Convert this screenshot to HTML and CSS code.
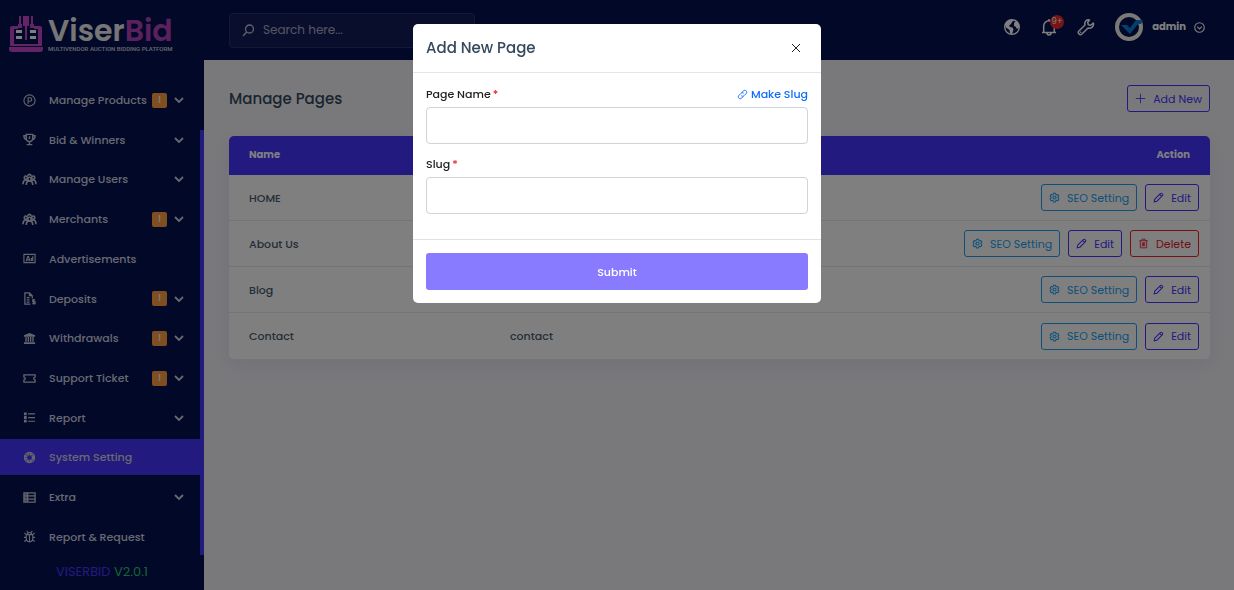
FILE: index.html
```html
<!DOCTYPE html>
<html lang="en">
<head>
    <meta charset="UTF-8">
    <meta name="viewport" content="width=device-width, initial-scale=1.0">
    <title>ViserBid - Manage Pages</title>
    <link rel="stylesheet" href="styles.css">
</head>
<body>

    <!-- Shared icons -->
    <svg class="sprite" aria-hidden="true">
        <symbol id="chevron" viewBox="0 0 10 10"><path d="M1 3l4 4 4-4" fill="none" stroke="currentColor" stroke-width="1.8"/></symbol>
        <symbol id="users" viewBox="0 0 16 14">
            <g fill="none" stroke="currentColor" stroke-width="1.7">
                <circle cx="4" cy="5" r="1.700"/><circle cx="12" cy="5" r="1.700"/><circle cx="8" cy="6.500" r="1.900"/>
                <path d="M1 12c0-5 5-6 5-2M15 12c0-5-5-6-5-2M4.500 13c0-6 7-6 7 0M6 3c1-2 3-2 4 0"/>
            </g>
        </symbol>
        <symbol id="gear" viewBox="0 0 14 14">
            <g fill="none" stroke="currentColor" stroke-width="1.3" stroke-linejoin="round">
                <path d="M5.700 1.500h2.600l.4 1.600 1 .6 1.600-.5 1.300 2.200-1.200 1.200v1l1.200 1.200-1.300 2.200-1.600-.5-1 .6-.4 1.600H5.700l-.4-1.600-1-.6-1.600.5-1.300-2.200 1.200-1.200v-1L1.400 5.400l1.300-2.200 1.600.5 1-.6z"/>
                <circle cx="7" cy="7" r="2"/>
            </g>
        </symbol>
        <symbol id="pen" viewBox="0 0 14 14"><path d="M1.500 12.500l.8-3.500 7-7c1.500-1.500 4.200 1.200 2.700 2.700l-7 7zM8.300 3l2.700 2.700" fill="none" stroke="currentColor" stroke-width="1.300"/></symbol>
        <symbol id="trash" viewBox="0 0 14 14"><path d="M1.500 3.500h11M5 3.500v-2h4v2M3 3.500v9h8v-9M5.500 5.500v5M7 5.500v5M8.500 5.500v5" fill="none" stroke="currentColor" stroke-width="1.100"/></symbol>
    </svg>

    <div class="page-wrapper">
        <!-- Sidebar -->
        <aside class="sidebar">
            <a class="logo" href="#">
                <svg width="36" height="38" viewBox="0 0 36 38" aria-hidden="true">
                    <g fill="#c548c9">
                        <path d="M4 11h6v3H6v15h24V14h-4v-3h6a2 2 0 0 1 2 2v18H2V13a2 2 0 0 1 2-2z"/>
                        <path d="M1 32h34v2a3 3 0 0 1-3 3H4a3 3 0 0 1-3-3z"/>
                        <path d="M11 1h2v8h-2zM23 1h2v8h-2zM15 1h6v10h-6zM10 9h4v4h-4zM22 9h4v4h-4zM17 10h2v15h-2z"/>
                    </g>
                    <path d="M8 15h6v3H8zM8 21h6v3H8zM22 15h6v3h-6zM22 21h6v3h-6z" fill="#fff"/>
                </svg>
                <span class="logo-text">
                    <span class="logo-name">Viser<b>Bid</b></span>
                    <span class="logo-tag">MULTIVENDOR AUCTION BIDDING PLATFORM</span>
                </span>
            </a>

            <nav class="menu">
                <a class="menu-item" href="#">
                    <svg class="menu-icon" viewBox="0 0 14 14"><g fill="none" stroke="currentColor" stroke-width="1.200"><circle cx="7" cy="7" r="6"/><path d="M5.500 10.500v-6.500h2a1.800 1.800 0 0 1 0 3.800h-2"/></g></svg>
                    <span>Manage Products</span><i class="alert">!</i><svg class="chevron"><use href="#chevron"/></svg>
                </a>
                <a class="menu-item" href="#">
                    <svg class="menu-icon" viewBox="0 0 14 14"><path d="M3.500 1.500h7v4c0 5-7 5-7 0zM3.500 3h-2.500c0 3 1 4 3 4M10.500 3h2.500c0 3-1 4-3 4M7 3.500v3M7 9v3M4 12.500h6" fill="none" stroke="currentColor" stroke-width="1.500"/></svg>
                    <span>Bid &amp; Winners</span><svg class="chevron"><use href="#chevron"/></svg>
                </a>
                <a class="menu-item" href="#">
                    <svg class="menu-icon"><use href="#users"/></svg>
                    <span>Manage Users</span><svg class="chevron"><use href="#chevron"/></svg>
                </a>
                <a class="menu-item" href="#">
                    <svg class="menu-icon"><use href="#users"/></svg>
                    <span>Merchants</span><i class="alert">!</i><svg class="chevron"><use href="#chevron"/></svg>
                </a>
                <a class="menu-item" href="#">
                    <svg class="menu-icon" viewBox="0 0 14 14"><path d="M1 2.500h12v9H1zM3.500 10l1.500-5h1l1.500 5M4 8.500h3M10.500 4.500V9H9V7h1.500" fill="none" stroke="currentColor" stroke-width="1.200"/></svg>
                    <span>Advertisements</span>
                </a>
                <a class="menu-item" href="#">
                    <svg class="menu-icon" viewBox="0 0 14 14"><path d="M8 13H2V1h5l3 3v3M7 1v3h3M4 6h3M4 8.500h3M4 11h3M13 8.500h-2.500v2H13v2h-3M11.500 7.500v6" fill="none" stroke="currentColor" stroke-width="1.300"/></svg>
                    <span>Deposits</span><i class="alert">!</i><svg class="chevron"><use href="#chevron"/></svg>
                </a>
                <a class="menu-item" href="#">
                    <svg class="menu-icon" viewBox="0 0 14 14"><path d="M7 1l6 2.500V5H1V3.500zM2.500 5.500H4v5H2.500zM5 5.500h1.500v5H5zM7.500 5.500H9v5H7.500zM10 5.500h1.500v5H10zM1 11h12v2H1z" fill="currentColor"/></svg>
                    <span>Withdrawals</span><i class="alert">!</i><svg class="chevron"><use href="#chevron"/></svg>
                </a>
                <a class="menu-item" href="#">
                    <svg class="menu-icon" viewBox="0 0 14 14"><path d="M1 3h12v2.500c-2 .5-2 2.500 0 3V11H1V8.500c2-.5 2-2.500 0-3z" fill="none" stroke="currentColor" stroke-width="1.400"/></svg>
                    <span>Support Ticket</span><i class="alert">!</i><svg class="chevron"><use href="#chevron"/></svg>
                </a>
                <a class="menu-item" href="#">
                    <svg class="menu-icon" viewBox="0 0 14 14"><path d="M1 1.500h3v3H1zM1 5.500h3v3H1zM1 9.500h3v3H1zM5.500 2.500H13v1.200H5.500zM5.500 6.500H13v1.200H5.500zM5.500 10.500H13v1.200H5.500z" fill="currentColor"/></svg>
                    <span>Report</span><svg class="chevron"><use href="#chevron"/></svg>
                </a>
                <a class="menu-item active" href="#">
                    <svg class="menu-icon" viewBox="0 0 14 14"><g fill="none" stroke="currentColor"><circle cx="7" cy="7" r="5.500" stroke-width="1.200"/><circle cx="7" cy="7" r="3.800" stroke-width="2.500" stroke-dasharray="2.400 .58"/></g></svg>
                    <span>System Setting</span>
                </a>
                <a class="menu-item" href="#">
                    <svg class="menu-icon" viewBox="0 0 14 14"><path d="M1 2h12v10H1zM1 5.300h12M1 8.700h12M5 2v10" fill="none" stroke="currentColor" stroke-width="1.400"/><path d="M1 2h4v10H1z" fill="currentColor" opacity=".6"/></svg>
                    <span>Extra</span><svg class="chevron"><use href="#chevron"/></svg>
                </a>
                <a class="menu-item" href="#">
                    <svg class="menu-icon" viewBox="0 0 14 14"><path d="M3.500 5h7v4c0 5-7 5-7 0zM4.500 5c0-3 5-3 5 0M7 5v7.500M1 8h2.500M10.500 8H13M1.500 3l2 2M12.500 3l-2 2M1.500 12.500l2-2M12.500 12.500l-2-2M4 1l1.500 2M10 1L8.500 3" fill="none" stroke="currentColor" stroke-width="1.200"/></svg>
                    <span>Report &amp; Request</span>
                </a>
            </nav>

            <div class="version"><span>VISERBID</span> <span class="version-number">V2.0.1</span></div>
            <div class="scroll-thumb"></div>
        </aside>

        <div class="body-wrapper">
            <!-- Top bar -->
            <header class="navbar">
                <label class="search">
                    <svg width="13" height="13" viewBox="0 0 13 13" aria-hidden="true"><g fill="none" stroke="currentColor" stroke-width="1.300"><circle cx="7.500" cy="5" r="4"/><path d="M4.700 8L1 12"/></g></svg>
                    <input type="search" placeholder="Search here..." aria-label="Search">
                </label>
                <div class="navbar-right">
                    <button class="icon-btn" type="button" aria-label="Website">
                        <svg width="18" height="18" viewBox="0 0 18 18"><circle cx="9" cy="9" r="7.300" fill="none" stroke="currentColor" stroke-width="1.400"/><path d="M2 6l3-3.500 4-.9 1.500 1.400-1.500 1-1 2-2 1.500 1 1.500 2.500.5 1 2-1.500 4.500-2-.5-.5-3.500L3 9.500zM11 5l2-2 3 3.500v3l-2 1.500-1.500-2.500-1.500-.5z" fill="currentColor"/></svg>
                    </button>
                    <button class="icon-btn" type="button" aria-label="Notifications">
                        <svg width="18" height="18" viewBox="0 0 18 18"><path d="M2 14.500h14M3.700 14.500V8a5.300 5.300 0 0 1 10.600 0v6.500M9 2.500V1M7 15c0 2.500 4 2.500 4 0" fill="none" stroke="currentColor" stroke-width="1.500"/></svg>
                        <span class="count">9+</span>
                    </button>
                    <button class="icon-btn" type="button" aria-label="Settings">
                        <svg width="18" height="18" viewBox="0 0 18 18"><path d="M12.500 2c-3-.8-5.500 2-4.500 5L1.700 13.200c-1.500 1.700 1.300 4.500 3 3L11 10c3 1 6.300-1.500 5.300-5l-2.600 2.300-2.400-.6-.6-2.400z" fill="none" stroke="currentColor" stroke-width="1.500" stroke-linejoin="round"/><circle cx="3.700" cy="14.300" r=".8" fill="currentColor"/></svg>
                    </button>
                    <button class="profile" type="button">
                        <svg width="30" height="30" viewBox="0 0 30 30" aria-hidden="true"><circle cx="15" cy="15" r="12" fill="none" stroke="#f5f2ed" stroke-width="4"/><path d="M7 13h6l3 3 6-8h7l-2 4h-3l-8 10z" fill="#0d7ddb"/></svg>
                        <b>admin</b>
                        <svg width="11" height="11" viewBox="0 0 12 12" aria-hidden="true"><g fill="none" stroke="currentColor" stroke-width="1.200"><circle cx="6" cy="6" r="5.200"/><path d="M3.500 5L6 7.500 8.500 5"/></g></svg>
                    </button>
                </div>
            </header>

            <main class="content">
                <div class="page-head">
                    <h1>Manage Pages</h1>
                    <button class="btn btn-primary" type="button">
                        <svg viewBox="0 0 14 14"><path d="M7 1v12M1 7h12" stroke="currentColor" stroke-width="1.100"/></svg>Add New
                    </button>
                </div>

                <table class="pages-table">
                    <thead>
                        <tr><th class="col-name">Name</th><th>Slug</th><th class="col-action">Action</th></tr>
                    </thead>
                    <tbody>
                        <tr>
                            <td>HOME</td>
                            <td>/</td>
                            <td><div class="actions">
                                <button class="btn btn-info" type="button"><svg><use href="#gear"/></svg>SEO Setting</button>
                                <button class="btn btn-primary" type="button"><svg><use href="#pen"/></svg>Edit</button>
                            </div></td>
                        </tr>
                        <tr>
                            <td>About Us</td>
                            <td>about-us</td>
                            <td><div class="actions">
                                <button class="btn btn-info" type="button"><svg><use href="#gear"/></svg>SEO Setting</button>
                                <button class="btn btn-primary" type="button"><svg><use href="#pen"/></svg>Edit</button>
                                <button class="btn btn-danger" type="button"><svg><use href="#trash"/></svg>Delete</button>
                            </div></td>
                        </tr>
                        <tr>
                            <td>Blog</td>
                            <td>blog</td>
                            <td><div class="actions">
                                <button class="btn btn-info" type="button"><svg><use href="#gear"/></svg>SEO Setting</button>
                                <button class="btn btn-primary" type="button"><svg><use href="#pen"/></svg>Edit</button>
                            </div></td>
                        </tr>
                        <tr>
                            <td>Contact</td>
                            <td>contact</td>
                            <td><div class="actions">
                                <button class="btn btn-info" type="button"><svg><use href="#gear"/></svg>SEO Setting</button>
                                <button class="btn btn-primary" type="button"><svg><use href="#pen"/></svg>Edit</button>
                            </div></td>
                        </tr>
                    </tbody>
                </table>
            </main>
        </div>
    </div>

    <!-- Add page modal -->
    <div class="backdrop">
        <form class="modal" role="dialog" aria-labelledby="modalTitle">
            <div class="modal-header">
                <h2 id="modalTitle">Add New Page</h2>
                <button class="close" type="button" aria-label="Close">
                    <svg width="10" height="10" viewBox="0 0 10 10"><path d="M1 1l8 8M9 1L1 9" stroke="currentColor" stroke-width="1"/></svg>
                </button>
            </div>
            <div class="modal-body">
                <div class="form-group">
                    <div class="label-row">
                        <label for="pageName">Page Name<span class="required">*</span></label>
                        <a class="make-slug" href="#"><svg width="11" height="11" viewBox="0 0 14 14"><path d="M6 4.500l2-2c2.500-2.500 6 1 3.500 3.500l-2.500 2.500c-1 1-2.500 1-3.500 0M8 9.500l-2 2c-2.500 2.500-6-1-3.500-3.500L5 5.500c1-1 2.500-1 3.500 0" fill="none" stroke="currentColor" stroke-width="1.200"/></svg>Make Slug</a>
                    </div>
                    <input type="text" id="pageName" required>
                </div>
                <div class="form-group">
                    <div class="label-row">
                        <label for="slug">Slug<span class="required">*</span></label>
                    </div>
                    <input type="text" id="slug" required>
                </div>
            </div>
            <div class="modal-footer">
                <button class="submit" type="submit">Submit</button>
            </div>
        </form>
    </div>

</body>
</html>
```

FILE: styles.css
```css
/* Reset and base styles */
* {
    box-sizing: border-box;
    margin: 0;
    padding: 0;
}
body {
    font-family: Poppins, Inter, "Open Sans", sans-serif;
    font-size: 11px;
    line-height: 18px;
    color: #4a5a70;
    background-color: #f3f3f9;
}
button, input {
    font: inherit;
    color: inherit;
}
button {
    border: none;
    background: none;
    cursor: pointer;
}
a {
    color: inherit;
    text-decoration: none;
}
.sprite {
    display: none;
}
.page-wrapper {
    display: flex;
    min-height: 100vh;
}
/* Sidebar */
.sidebar {
    position: relative;
    display: flex;
    flex-direction: column;
    flex: 0 0 204px;
    height: 100vh;
    background-color: #051050;
    color: #d0d3e0;
}
.logo {
    display: flex;
    gap: 4px;
    height: 82px;
    padding: 15px 8px;
}
.logo-text {
    display: flex;
    flex-direction: column;
    white-space: nowrap;
}
.logo-name {
    font-size: 30px;
    line-height: 30px;
    padding-top: 1px;
    font-weight: 600;
    color: #ececec;
}
.logo-name b {
    font-weight: 600;
    color: #b642bd;
}
.logo-tag {
    font-family: Roboto, sans-serif;
    font-size: 6px;
    line-height: 6px;
    font-weight: 500;
}
.menu {
    display: flex;
    flex: 1;
    flex-direction: column;
    justify-content: space-between;
}
.menu-item {
    display: flex;
    align-items: center;
    height: 36px;
    padding: 0 20px 0 22px;
    font-weight: 500;
}
.menu-item span {
    margin-right: auto;
    white-space: nowrap;
}
.menu-icon {
    width: 15px;
    height: 13px;
    margin-right: 12px;
    flex: none;
    color: #c9ccda;
}
.menu-item.active {
    background-color: #4634ff;
}
.alert {
    width: 15px;
    height: 15px;
    border-radius: 2px;
    background-color: #ff9f43;
    color: #fff;
    font-size: 10px;
    line-height: 14px;
    font-style: normal;
    text-align: center;
}
.chevron {
    width: 10px;
    height: 10px;
    margin-left: 7px;
    flex: none;
}
.version {
    height: 35px;
    font-size: 13px;
    line-height: 34px;
    text-align: center;
    color: #4634ff;
}
.version-number {
    color: #28c76f;
}
.scroll-thumb {
    position: absolute;
    top: 130px;
    right: 0;
    bottom: 35px;
    width: 4px;
    background-color: #4634ff;
}
/* Top bar */
.body-wrapper {
    flex: 1;
    min-width: 0;
}
.navbar {
    display: flex;
    align-items: center;
    justify-content: space-between;
    height: 60px;
    padding: 0 29px 0 25px;
    background-color: #051050;
    color: #fff;
}
.search {
    display: flex;
    align-items: center;
    gap: 8px;
    width: 246px;
    height: 35px;
    padding: 0 12px;
    border: 1px solid #29336b;
    border-radius: 4px;
    background-color: #131d5a;
    color: #c3c7da;
}
.search input {
    flex: 1;
    min-width: 0;
    border: none;
    outline: none;
    background: none;
    font-size: 12px;
}
.search input::placeholder {
    color: #a9adc4;
}
.navbar-right {
    display: flex;
    align-items: center;
    gap: 19px;
    padding-bottom: 6px;
}
.icon-btn {
    position: relative;
    display: flex;
}
.count {
    position: absolute;
    top: -3px;
    right: -6px;
    width: 14px;
    height: 14px;
    border-radius: 50%;
    background-color: #ea2a2a;
    font-size: 8px;
    line-height: 14px;
    text-align: center;
}
.profile {
    display: flex;
    align-items: center;
    gap: 8px;
    font-size: 10px;
}
/* Page content */
.content {
    padding: 25px 24px 25px 25px;
}
.page-head {
    display: flex;
    align-items: center;
    justify-content: space-between;
    margin-bottom: 24px;
}
h1 {
    font-size: 15px;
    font-weight: 500;
    color: #34495e;
}
.btn {
    display: inline-flex;
    align-items: center;
    gap: 7px;
    height: 27px;
    padding: 0 7px;
    border: 1px solid;
    border-radius: 3px;
    white-space: nowrap;
}
.btn svg {
    width: 11px;
    height: 11px;
}
.btn-primary {
    color: #4634ff;
}
.btn-info {
    color: #1e9ff2;
}
.btn-danger {
    color: #ea2027;
}
/* Pages table */
.pages-table {
    width: 100%;
    border-collapse: separate;
    border-spacing: 0;
    border-radius: 5px;
    background-color: #fff;
    box-shadow: 0 6px 20px rgba(80, 80, 140, 0.1);
    overflow: hidden;
}
.pages-table th {
    height: 39px;
    padding: 0 20px 2px;
    background-color: #4634ff;
    color: #fff;
    font-size: 10px;
    font-weight: 700;
    text-align: left;
}
.pages-table .col-name {
    width: 261px;
}
.pages-table .col-action {
    text-align: right;
}
.pages-table td {
    height: 46px;
    padding: 0 11px 0 20px;
    border-bottom: 1px solid #e8e8ee;
    font-weight: 500;
}
.pages-table .btn {
    font-weight: 400;
}
.pages-table tr:last-child td {
    border-bottom: none;
}
.actions {
    display: flex;
    justify-content: flex-end;
    gap: 8px;
}
/* Modal */
.backdrop {
    position: fixed;
    inset: 0;
    padding: 24px 16px;
    background-color: rgba(0, 0, 0, 0.5);
}
.modal {
    max-width: 408px;
    margin: 0 auto;
    border-radius: 5px;
    background-color: #fff;
    color: #34495e;
}
.modal-header {
    display: flex;
    align-items: center;
    justify-content: space-between;
    height: 49px;
    padding: 0 20px 0 13px;
    border-bottom: 1px solid #e3e6e9;
}
h2 {
    font-size: 15px;
    font-weight: 500;
}
.close {
    display: flex;
    color: #222;
}
.modal-body {
    padding: 12px 13px 14px;
}
.form-group {
    margin-bottom: 11px;
}
.label-row {
    display: flex;
    justify-content: space-between;
    margin-bottom: 4px;
}
.label-row label {
    font-weight: 500;
    color: #222;
}
.required {
    margin-left: 2px;
    color: #ea2a2a;
}
.make-slug {
    display: flex;
    align-items: center;
    gap: 3px;
    font-weight: 500;
    color: #0d6efd;
}
.form-group input {
    display: block;
    width: 100%;
    height: 37px;
    padding: 0 12px;
    border: 1px solid #ced4da;
    border-radius: 4px;
}
.modal-footer {
    padding: 13px;
    border-top: 1px solid #dee2e6;
}
.submit {
    width: 100%;
    height: 37px;
    border-radius: 3px;
    background-color: #887bff;
    color: #fff;
    font-weight: 500;
}
```
